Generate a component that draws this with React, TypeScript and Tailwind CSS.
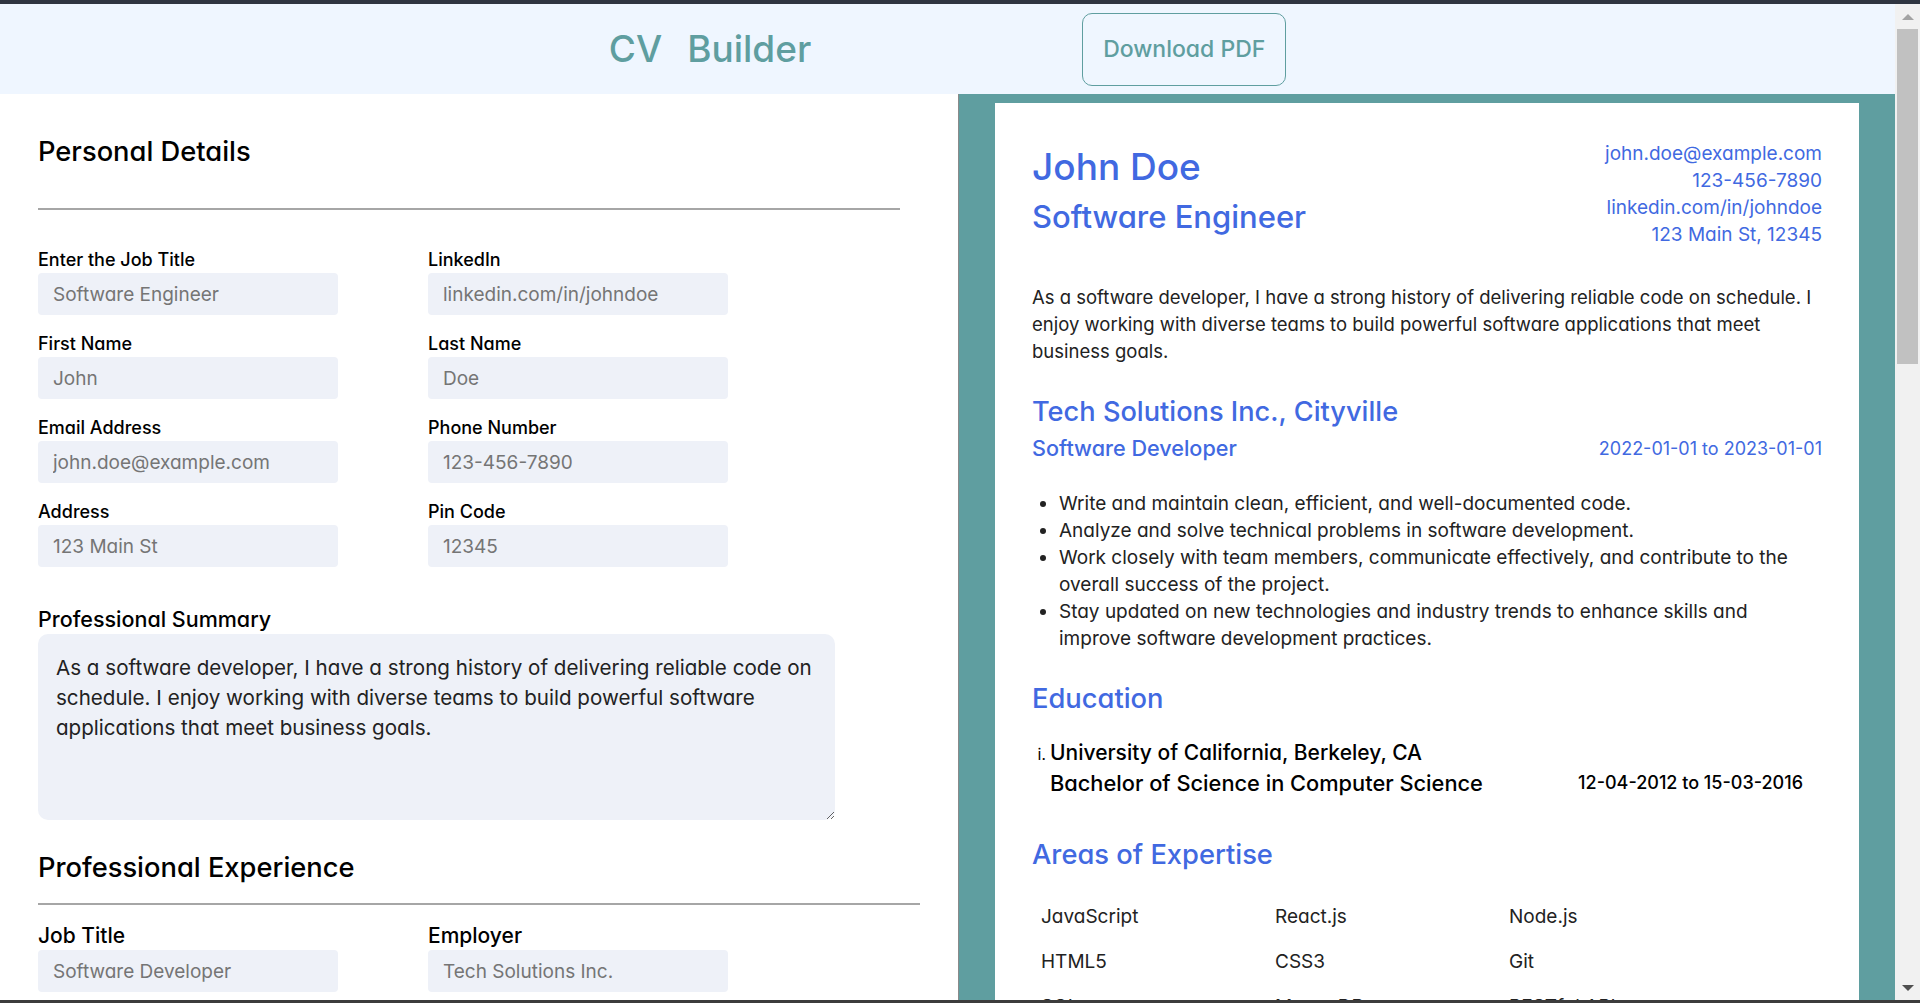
import React from 'react';

const personalFields: [string, string][] = [
  ['Enter the Job Title', 'Software Engineer'],
  ['LinkedIn', 'linkedin.com/in/johndoe'],
  ['First Name', 'John'],
  ['Last Name', 'Doe'],
  ['Email Address', 'john.doe@example.com'],
  ['Phone Number', '123-456-7890'],
  ['Address', '123 Main St'],
  ['Pin Code', '12345'],
];

const experienceFields: [string, string][] = [
  ['Job Title', 'Software Developer'],
  ['Employer', 'Tech Solutions Inc.'],
  ['City', 'Cityville'],
  ['Start Date', '2022-01-01'],
  ['End Date', '2023-01-01'],
];

const educationFields: [string, string][] = [
  ['School', 'University of California, Berkeley'],
  ['City', 'Berkeley, CA'],
  ['Degree', 'Bachelor of Science in Computer Science'],
  ['Start Date', '12-04-2012'],
  ['End Date', '15-03-2016'],
];

const bullets = [
  'Write and maintain clean, efficient, and well-documented code.',
  'Analyze and solve technical problems in software development.',
  'Work closely with team members, communicate effectively, and contribute to the overall success of the project.',
  'Stay updated on new technologies and industry trends to enhance skills and improve software development practices.',
];

const skills = [
  'JavaScript', 'React.js', 'Node.js',
  'HTML5', 'CSS3', 'Git',
  'SQL', 'MongoDB', 'RESTful APIs',
  'TypeScript', 'Agile', 'Testing',
];

const summary =
  'As a software developer, I have a strong history of delivering reliable code on schedule. I enjoy working with diverse teams to build powerful software applications that meet business goals.';

function Field({ label, placeholder, big }: { label: string; placeholder: string; big?: boolean }) {
  return (
    <div className="flex flex-col gap-[2px]">
      <label
        className={
          big
            ? 'text-[21px] leading-[24px] font-medium text-black'
            : 'text-[18px] leading-[22px] font-medium text-black'
        }
      >
        {label}
      </label>
      <input
        placeholder={placeholder}
        className="w-[300px] h-[42px] rounded-[4px] bg-[#eef1f8] px-[15px] text-[19px] text-[#222] outline-none placeholder:text-[#757575]"
      />
    </div>
  );
}

function SectionTitle({ children }: { children: React.ReactNode }) {
  return <h2 className="text-[27.3px] leading-[34px] font-medium text-black">{children}</h2>;
}

function Scrollbar() {
  return (
    <div className="fixed right-0 top-[4px] bottom-[3px] w-[25px] bg-[#f1f1f1] flex flex-col items-center">
      <div className="h-[25px] flex items-center justify-center">
        <div className="w-0 h-0 border-l-[6px] border-r-[6px] border-b-[6px] border-l-transparent border-r-transparent border-b-[#a3a3a3]" />
      </div>
      <div className="w-[21px] h-[335px] bg-[#c1c1c1]" />
      <div className="flex-1" />
      <div className="h-[25px] flex items-center justify-center">
        <div className="w-0 h-0 border-l-[6px] border-r-[6px] border-t-[6px] border-l-transparent border-r-transparent border-t-[#505050]" />
      </div>
    </div>
  );
}

export default function App() {
  return (
    <div className="min-h-screen bg-white font-['Inter',sans-serif] [font-feature-settings:'cv11']">
      <div className="h-[4px] bg-[#2f3541]" />

      <div className="pr-[25px]">
        <header className="h-[90px] bg-[#eff6ff] flex items-center justify-center gap-[271px]">
          <h1 className="flex gap-[25px] text-[37px] leading-[46px] font-medium text-[#5f9ea0]">
            <span>CV</span>
            <span>Builder</span>
          </h1>
          <button className="w-[204px] h-[73px] rounded-[10px] border border-[#5f9ea0] text-[23px] font-medium text-[#5f9ea0]">
            Download PDF
          </button>
        </header>

        <div className="flex">
          {/* form */}
          <div className="w-[959px] shrink-0 border-r border-[#8a8a8a] pl-[38px] pt-[41px] pb-[60px]">
            <SectionTitle>Personal Details</SectionTitle>
            <div className="mt-[39px] h-[2px] w-[862px] bg-[#a6a6a6]" />

            <div className="mt-[39px] grid grid-cols-[300px_300px] gap-x-[90px] gap-y-[18px]">
              {personalFields.map(([l, p]) => (
                <Field key={l} label={l} placeholder={p} />
              ))}
            </div>

            <div className="mt-[40px] flex flex-col gap-[3px]">
              <label className="text-[21.5px] leading-[24px] font-medium text-black">Professional Summary</label>
              <textarea
                defaultValue={summary}
                className="w-[797px] h-[186px] rounded-[10px] bg-[#eef1f8] px-[18px] pt-[19px] pb-[12px] text-[20.6px] leading-[30px] text-[#222] outline-none"
              />
            </div>

            <div className="mt-[31px]">
              <SectionTitle>Professional Experience</SectionTitle>
            </div>
            <div className="mt-[18px] h-[2px] w-[882px] bg-[#a6a6a6]" />

            <div className="mt-[19px] grid grid-cols-[300px_300px] gap-x-[90px] gap-y-[18px]">
              {experienceFields.map(([l, p]) => (
                <Field key={l} label={l} placeholder={p} big />
              ))}
            </div>
            <div className="mt-[24px] flex flex-col gap-[3px]">
              <label className="text-[21px] leading-[24px] font-medium text-black">Responsibilities</label>
              <textarea
                defaultValue={bullets.join('\n')}
                className="w-[797px] h-[186px] rounded-[10px] bg-[#eef1f8] px-[18px] pt-[19px] pb-[12px] text-[20.6px] leading-[30px] text-[#222] outline-none"
              />
            </div>
            <button className="mt-[24px] h-[48px] px-[20px] rounded-[8px] border border-[#5f9ea0] text-[18px] font-medium text-[#5f9ea0]">
              Add Experience
            </button>

            <div className="mt-[40px]">
              <SectionTitle>Education</SectionTitle>
            </div>
            <div className="mt-[18px] h-[2px] w-[882px] bg-[#a6a6a6]" />
            <div className="mt-[19px] grid grid-cols-[300px_300px] gap-x-[90px] gap-y-[18px]">
              {educationFields.map(([l, p], i) => (
                <Field key={l + i} label={l} placeholder={p} big />
              ))}
            </div>
            <button className="mt-[24px] h-[48px] px-[20px] rounded-[8px] border border-[#5f9ea0] text-[18px] font-medium text-[#5f9ea0]">
              Add Education
            </button>

            <div className="mt-[40px]">
              <SectionTitle>Areas of Expertise</SectionTitle>
            </div>
            <div className="mt-[18px] h-[2px] w-[882px] bg-[#a6a6a6]" />
            <div className="mt-[19px] grid grid-cols-[300px_300px] gap-x-[90px] gap-y-[18px]">
              {skills.slice(0, 6).map((s, i) => (
                <Field key={s} label={`Skill ${i + 1}`} placeholder={s} big />
              ))}
            </div>
          </div>

          {/* preview */}
          <div className="flex-1 bg-[#5f9ea0] px-[36px] pt-[9px] pb-[40px]">
            <div className="bg-white px-[37px] pt-[37px] pb-[60px] text-[#222]">
              <div className="flex justify-between items-start">
                <div className="pt-[4px] text-[#4169e1]">
                  <div className="text-[37px] leading-[46px] font-medium">John Doe</div>
                  <div className="mt-[8px] text-[31px] leading-[38px] font-medium">Software Engineer</div>
                </div>
                <div className="text-right text-[19px] leading-[27px] text-[#4169e1]">
                  <p>john.doe@example.com</p>
                  <p>123-456-7890</p>
                  <p>linkedin.com/in/johndoe</p>
                  <p>123 Main St, 12345</p>
                </div>
              </div>

              <p className="mt-[36px] text-[18.5px] leading-[27px]">
                As a software developer, I have a strong history of delivering reliable code on schedule. I<br />
                enjoy working with diverse teams to build powerful software applications that meet<br />
                business goals.
              </p>

              <div className="mt-[30px] text-[27.2px] leading-[34px] font-medium text-[#4169e1]">
                Tech Solutions Inc., Cityville
              </div>
              <div className="mt-[5px] flex justify-between items-end text-[#4169e1]">
                <span className="text-[21.6px] leading-[28px] font-medium">Software Developer</span>
                <span className="text-[18px] leading-[26px]">2022-01-01 to 2023-01-01</span>
              </div>
              <ul className="mt-[28px] list-disc pl-[27px] pr-[10px] text-[19px] leading-[27px]">
                {bullets.map((b) => (
                  <li key={b}>{b}</li>
                ))}
              </ul>

              <div className="mt-[30px] text-[27.3px] leading-[34px] font-medium text-[#4169e1]">Education</div>
              <ol className="mt-[24px] list-[lower-roman] pl-[18px] text-black">
                <li>
                  <div className="text-[21px] leading-[26px] font-medium">University of California, Berkeley, CA</div>
                  <div className="mt-[4px] flex justify-between items-center pr-[19px]">
                    <span className="text-[21.8px] leading-[26px] font-medium">Bachelor of Science in Computer Science</span>
                    <span className="text-[18px] leading-[26px] font-medium">12-04-2012 to 15-03-2016</span>
                  </div>
                </li>
              </ol>

              <div className="mt-[42px] text-[27.3px] leading-[34px] font-medium text-[#4169e1]">Areas of Expertise</div>
              <div className="mt-[22px] grid grid-cols-[repeat(3,234px)]">
                {skills.map((s) => (
                  <div key={s} className="px-[9px] py-[9px] text-[19px] leading-[27px]">
                    {s}
                  </div>
                ))}
              </div>
            </div>
          </div>
        </div>
      </div>

      <Scrollbar />
      <div className="fixed bottom-0 inset-x-0 h-[3px] bg-[#3c3c3c]" />
    </div>
  );
}
